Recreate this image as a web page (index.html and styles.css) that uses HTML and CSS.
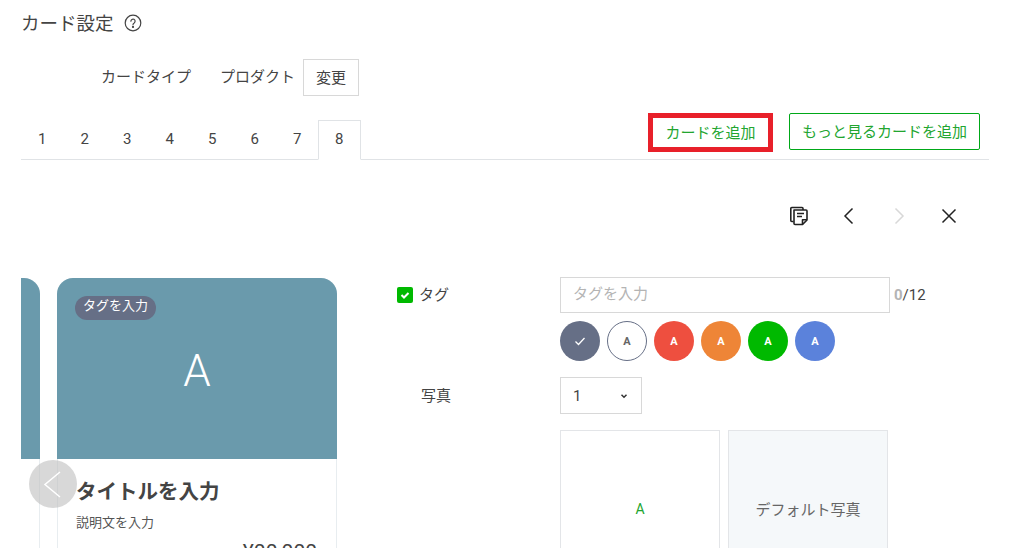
FILE: index.html
```html
<!DOCTYPE html>
<html lang="ja">
<head>
    <meta charset="UTF-8">
    <meta name="viewport" content="width=device-width, initial-scale=1.0">
    <title>カード設定</title>
    <link rel="stylesheet" href="styles.css">
</head>
<body>
    <div class="container">
        <div class="page-title">
            <h2>カード設定</h2>
            <svg class="help-icon" width="18" height="18" viewBox="0 0 18 18" fill="none" stroke="#444" stroke-width="1.2">
                <circle cx="9" cy="9" r="7.8"/>
                <path d="M6.9 7.2a2.1 2.1 0 1 1 3.3 1.7c-.8.5-1.2.9-1.2 1.8" stroke-linecap="round"/>
                <circle cx="9" cy="12.9" r=".5" fill="#444"/>
            </svg>
        </div>

        <div class="type-row">
            <span class="type-label">カードタイプ</span>
            <span class="type-value">プロダクト</span>
            <button class="btn-change">変更</button>
        </div>

        <div class="tabs">
            <div class="tab">1</div>
            <div class="tab">2</div>
            <div class="tab">3</div>
            <div class="tab">4</div>
            <div class="tab">5</div>
            <div class="tab">6</div>
            <div class="tab">7</div>
            <div class="tab tab-active">8</div>
            <div class="tab-actions">
                <button class="btn-green btn-marked">カードを追加</button>
                <button class="btn-green">もっと見るカードを追加</button>
            </div>
        </div>

        <div class="toolbar">
            <button class="tool-btn">
                <svg width="20" height="20" viewBox="0 0 20 20" fill="none" stroke="#222" stroke-width="1.6" stroke-linejoin="round">
                    <path d="M4.5 15.500H2.800a1 1 0 0 1-1-1V2.500a1 1 0 0 1 1-1h10.200a1 1 0 0 1 1 1v1.500"/>
                    <path d="M5 4h12a1 1 0 0 1 1 1v9l-4.500 4.500H6a1 1 0 0 1-1-1z" fill="#fff"/>
                    <path d="M18 13.800h-4.500v4.700"/>
                    <path d="M8 7.500h7M8 10.500h5"/>
                </svg>
            </button>
            <button class="tool-btn">
                <svg width="20" height="20" viewBox="0 0 20 20" fill="none" stroke="#222" stroke-width="1.5"><path d="M13.500 2.500L6 10l7.500 7.500"/></svg>
            </button>
            <button class="tool-btn">
                <svg width="20" height="20" viewBox="0 0 20 20" fill="none" stroke="#d8d8d8" stroke-width="1.5"><path d="M6.500 2.500L14 10l-7.500 7.500"/></svg>
            </button>
            <button class="tool-btn">
                <svg width="20" height="20" viewBox="0 0 20 20" fill="none" stroke="#222" stroke-width="1.5"><path d="M3.500 3.500l13 13M16.500 3.500l-13 13"/></svg>
            </button>
        </div>

        <div class="editor">
            <div class="preview">
                <div class="card-track">
                    <div class="card">
                        <div class="card-image"></div>
                    </div>
                    <div class="card">
                        <div class="card-image">
                            <span class="card-tag">タグを入力</span>
                            <span class="card-letter">A</span>
                        </div>
                        <div class="card-body">
                            <div class="card-title">タイトルを入力</div>
                            <div class="card-desc">説明文を入力</div>
                            <div class="card-price">¥00,000</div>
                        </div>
                    </div>
                </div>
                <button class="carousel-prev">
                    <svg width="48" height="48" viewBox="0 0 48 48" fill="none" stroke="#fff" stroke-width="1.5"><path d="M31 12L16 24.500 31 37"/></svg>
                </button>
            </div>

            <div class="form">
                <div class="form-label form-label-tag">
                    <span class="checkbox">
                        <svg width="10" height="10" viewBox="0 0 10 10" fill="none" stroke="#fff" stroke-width="2"><path d="M1.500 5l2.500 2.500 4.500-4.500"/></svg>
                    </span>
                    <span class="label-text">タグ</span>
                </div>
                <div class="form-value">
                    <div class="input-row">
                        <input type="text" class="tag-input" placeholder="タグを入力">
                        <span class="counter"><b>0</b>/12</span>
                    </div>
                    <div class="swatches">
                        <span class="swatch swatch-slate">
                            <svg width="12" height="12" viewBox="0 0 12 12" fill="none" stroke="#fff" stroke-width="1.300"><path d="M1.500 6.500l3 3 6-6.500"/></svg>
                        </span>
                        <span class="swatch swatch-white">A</span>
                        <span class="swatch swatch-red">A</span>
                        <span class="swatch swatch-orange">A</span>
                        <span class="swatch swatch-green">A</span>
                        <span class="swatch swatch-blue">A</span>
                    </div>
                </div>

                <div class="form-label form-label-photo"><span class="label-text">写真</span></div>
                <div class="form-value">
                    <div class="select-box">
                        <span>1</span>
                        <svg width="10" height="10" viewBox="0 0 10 10" fill="none" stroke="#333" stroke-width="1.500"><path d="M2.500 3.800L5 6.200l2.500-2.400"/></svg>
                    </div>
                    <div class="photos">
                        <div class="photo photo-upload">A</div>
                        <div class="photo photo-default">デフォルト写真</div>
                    </div>
                </div>
            </div>
        </div>
    </div>
</body>
</html>
```

FILE: styles.css
```css
html, body {
    height: 548px;
    overflow: hidden;
}
body {
    margin: 0;
    font-family: Roboto, 'Noto Sans CJK JP', sans-serif;
    font-size: 15px;
    font-weight: 400;
    color: #444;
    background: white;
}
button {
    font-family: inherit;
    font-weight: inherit;
    background: white;
    cursor: pointer;
}
.container {
    width: 968px;
    margin-left: 21px;
}
.page-title {
    display: flex;
    align-items: center;
    gap: 10px;
    height: 46px;
}
.page-title h2 {
    margin: -2px 0 0 0;
    font-size: 18.500px;
    font-weight: 400;
}
.help-icon {
    flex-shrink: 0;
}
.type-row {
    display: flex;
    align-items: center;
    height: 37px;
    margin-top: 13px;
    padding-left: 80px;
}
.type-label {
    width: 119px;
    margin-top: -4px;
}
.type-value {
    width: 83px;
    margin-top: -4px;
}
.btn-change {
    width: 56px;
    height: 37px;
    border: 1px solid #d8d8d8;
    font-size: 15px;
    color: #444;
    padding: 0 0 2px 0;
}
.tabs {
    display: flex;
    align-items: flex-end;
    height: 40px;
    margin-top: 24px;
    border-bottom: 1px solid #e0e3e6;
    box-sizing: border-box;
}
.tab {
    width: 42.500px;
    height: 39px;
    line-height: 39px;
    text-align: center;
    font-size: 15px;
    box-sizing: border-box;
}
.tab-active {
    width: 43.500px;
    height: 40px;
    line-height: 37px;
    margin-bottom: -1px;
    margin-left: -1px;
    border: 1px solid #e0e3e6;
    border-bottom: 1px solid white;
}
.tab-actions {
    display: flex;
    align-items: flex-start;
    gap: 16px;
    margin-left: auto;
    margin-right: 9px;
    align-self: flex-start;
    margin-top: -7px;
}
.btn-green {
    height: 37px;
    padding: 0 12px 3px 12px;
    font-size: 15px;
    color: #22a52f;
    border: 1px solid #00a818;
    border-radius: 2px;
}
.btn-marked {
    width: 125px;
    height: 39px;
    padding: 0 0 3px 0;
    border: 5px solid #e8202a;
    border-radius: 0;
}
.toolbar {
    display: flex;
    justify-content: flex-end;
    padding-top: 44px;
    padding-right: 15px;
}
.tool-btn {
    width: 50px;
    height: 24px;
    padding: 0;
    border: none;
    display: flex;
    align-items: center;
    justify-content: center;
}
.editor {
    display: flex;
    margin-top: 49px;
}
.preview {
    position: relative;
    width: 376px;
    flex-shrink: 0;
    overflow: hidden;
    padding-top: 1px;
    height: 270px;
}
.card-track {
    display: flex;
    gap: 17px;
    margin-left: -261px;
}
.card {
    width: 280px;
    height: 400px;
    flex-shrink: 0;
    box-sizing: border-box;
    border: 1px solid #e8edf0;
    border-top: none;
    border-radius: 16px 16px 0 0;
}
.card-image {
    position: relative;
    height: 181px;
    margin: 0 -1px;
    background: #6a9aac;
    border-radius: 16px 16px 0 0;
    display: flex;
    align-items: center;
    justify-content: center;
}
.card-tag {
    position: absolute;
    top: 18px;
    left: 18px;
    padding: 0 8px;
    height: 24px;
    line-height: 20px;
    border-radius: 12px;
    background: #666f86;
    color: white;
    font-size: 13px;
}
.card-letter {
    color: white;
    font-size: 44px;
    font-weight: 300;
    margin-top: 4px;
}
.card-body {
    padding: 18px 19px 18px 18px;
}
.card-title {
    font-size: 20.500px;
    font-weight: 700;
    line-height: 30px;
}
.card-desc {
    font-size: 13px;
    line-height: 20px;
    margin-top: 6px;
    color: #555;
}
.card-price {
    font-size: 21px;
    text-align: right;
    margin-top: 4px;
    line-height: 30px;
}
.carousel-prev {
    position: absolute;
    left: 8px;
    top: 183px;
    width: 48px;
    height: 48px;
    padding: 0;
    border: none;
    border-radius: 50%;
    background: rgba(190, 190, 190, 0.6);
}
.form {
    display: grid;
    grid-template-columns: 163px 1fr;
    align-content: start;
    row-gap: 16px;
}
.form-label {
    display: flex;
    align-items: center;
}
.form-label-tag {
    height: 36px;
    gap: 6px;
}
.form-label-photo {
    height: 37px;
    padding-left: 24px;
    align-self: start;
}
.label-text {
    margin-top: -3px;
}
.checkbox {
    width: 16px;
    height: 16px;
    border-radius: 2px;
    background: #00b900;
    display: flex;
    align-items: center;
    justify-content: center;
}
.input-row {
    display: flex;
    align-items: center;
    gap: 4px;
}
.tag-input {
    width: 330px;
    height: 36px;
    box-sizing: border-box;
    padding: 0 12px 2px 12px;
    border: 1px solid #d8d8d8;
    font-family: inherit;
    font-size: 15px;
    outline: none;
}
.tag-input::placeholder {
    color: #b4b4b4;
}
.counter {
    font-size: 15px;
}
.counter b {
    color: #b4b4b4;
    font-weight: 700;
}
.swatches {
    display: flex;
    gap: 7px;
    margin-top: 8px;
}
.swatch {
    width: 40px;
    height: 40px;
    box-sizing: border-box;
    border-radius: 50%;
    display: flex;
    align-items: center;
    justify-content: center;
    color: white;
    font-size: 11px;
    font-weight: 700;
}
.swatch-slate { background: #666f86; }
.swatch-white { background: white; border: 1px solid #666f86; color: #666; }
.swatch-red { background: #ee4f3f; }
.swatch-orange { background: #ee8537; }
.swatch-green { background: #00b900; }
.swatch-blue { background: #5b82db; }
.select-box {
    display: flex;
    align-items: center;
    justify-content: space-between;
    width: 82px;
    height: 37px;
    box-sizing: border-box;
    padding: 0 12px;
    border: 1px solid #d8d8d8;
}
.photos {
    display: flex;
    gap: 8px;
    margin-top: 16px;
}
.photo {
    width: 160px;
    height: 157px;
    box-sizing: border-box;
    border: 1px solid #e3e5e8;
    display: flex;
    align-items: center;
    justify-content: center;
}
.photo-upload {
    color: #22a52f;
    font-size: 14px;
}
.photo-default {
    background: #f5f8fa;
    color: #666;
}
```
